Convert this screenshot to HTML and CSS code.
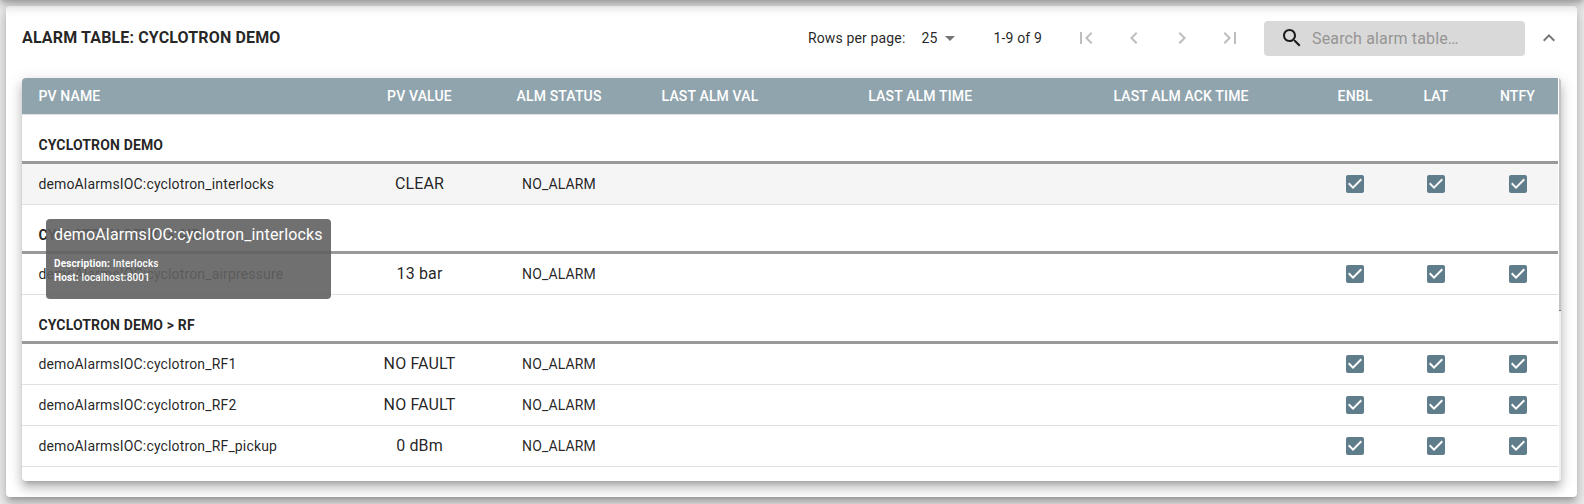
FILE: index.html
```
<!DOCTYPE html>
<html lang="en">
<head>
<meta charset="utf-8">
<title>Alarm Table</title>
<link rel="stylesheet" href="styles.css">
</head>
<body>
<svg class="defs" width="0" height="0">
  <symbol id="check" viewBox="0 0 24 24"><path d="M19 3H5c-1.11 0-2 .9-2 2v14c0 1.1.89 2 2 2h14c1.11 0 2-.9 2-2V5c0-1.1-.89-2-2-2zm-9 14l-5-5 1.41-1.41L10 14.17l7.59-7.59L19 8l-9 9z"/></symbol>
</svg>
<div class="appbar-shadow"></div>
<main class="card">
  <header class="toolbar">
    <h1 class="title">ALARM TABLE: CYCLOTRON DEMO</h1>
    <span class="rows-label">Rows per page:</span>
    <span class="rows-value">25</span>
    <svg class="icon caret" viewBox="0 0 24 24"><path d="M7 10l5 5 5-5z"/></svg>
    <span class="range">1-9 of 9</span>
    <nav class="pager">
      <svg class="icon" viewBox="0 0 24 24"><path d="M18.41 16.59L13.82 12l4.59-4.59L17 6l-6 6 6 6zM6 6h2v12H6z"/></svg>
      <svg class="icon" viewBox="0 0 24 24"><path d="M15.41 16.59L10.83 12l4.58-4.59L14 6l-6 6 6 6z"/></svg>
      <svg class="icon" viewBox="0 0 24 24"><path d="M8.59 16.59L13.17 12 8.59 7.41 10 6l6 6-6 6z"/></svg>
      <svg class="icon" viewBox="0 0 24 24"><path d="M5.59 7.41L10.18 12l-4.59 4.59L7 18l6-6-6-6zM16 6h2v12h-2z"/></svg>
    </nav>
    <div class="search">
      <svg class="icon" viewBox="0 0 24 24"><path d="M15.5 14h-.79l-.28-.27C15.41 12.59 16 11.11 16 9.5 16 5.91 13.09 3 9.5 3S3 5.91 3 9.5 5.91 16 9.5 16c1.61 0 3.09-.59 4.23-1.57l.27.28v.79l5 4.99L20.49 19l-4.99-5zm-6 0C7.01 14 5 11.99 5 9.5S7.01 5 9.5 5 14 7.01 14 9.5 11.99 14 9.5 14z"/></svg>
      <span class="placeholder">Search alarm table…</span>
    </div>
    <svg class="icon collapse" viewBox="0 0 24 24"><path d="M7.41 15.41L12 10.83l4.59 4.58L18 14l-6-6-6 6z"/></svg>
  </header>
  <section class="table-box">
    <div class="table">
      <div class="row head">
        <span>PV NAME</span><span>PV VALUE</span><span>ALM STATUS</span><span>LAST ALM VAL</span><span>LAST ALM TIME</span><span>LAST ALM ACK TIME</span><span>ENBL</span><span>LAT</span><span>NTFY</span>
      </div>
      <div class="group">CYCLOTRON DEMO</div>
      <div class="row hover">
        <span>demoAlarmsIOC:cyclotron_interlocks</span><span class="value">CLEAR</span><span>NO_ALARM</span><span></span><span></span><span></span><svg class="box"><use href="#check"/></svg><svg class="box"><use href="#check"/></svg><svg class="box"><use href="#check"/></svg>
      </div>
      <div class="group">CYCLOTRON DEMO &gt; AIR</div>
      <div class="row">
        <span>demoAlarmsIOC:cyclotron_airpressure</span><span class="value">13 bar</span><span>NO_ALARM</span><span></span><span></span><span></span><svg class="box"><use href="#check"/></svg><svg class="box"><use href="#check"/></svg><svg class="box"><use href="#check"/></svg>
      </div>
      <div class="group">CYCLOTRON DEMO &gt; RF</div>
      <div class="row">
        <span>demoAlarmsIOC:cyclotron_RF1</span><span class="value">NO FAULT</span><span>NO_ALARM</span><span></span><span></span><span></span><svg class="box"><use href="#check"/></svg><svg class="box"><use href="#check"/></svg><svg class="box"><use href="#check"/></svg>
      </div>
      <div class="row">
        <span>demoAlarmsIOC:cyclotron_RF2</span><span class="value">NO FAULT</span><span>NO_ALARM</span><span></span><span></span><span></span><svg class="box"><use href="#check"/></svg><svg class="box"><use href="#check"/></svg><svg class="box"><use href="#check"/></svg>
      </div>
      <div class="row">
        <span>demoAlarmsIOC:cyclotron_RF_pickup</span><span class="value">0 dBm</span><span>NO_ALARM</span><span></span><span></span><span></span><svg class="box"><use href="#check"/></svg><svg class="box"><use href="#check"/></svg><svg class="box"><use href="#check"/></svg>
      </div>
    </div>
    <div class="scrollbar"><div class="thumb"></div></div>
  </section>
</main>
<aside class="tooltip">
  <div class="tip-title">demoAlarmsIOC:cyclotron_interlocks</div>
  <div class="tip-line"><b>Description:</b> Interlocks</div>
  <div class="tip-line"><b>Host:</b> localhost:8001</div>
</aside>
</body>
</html>
```
FILE: styles.css
```
* { box-sizing: border-box; }
body {
  margin: 0;
  height: 504px;
  padding: 6px 7px 7px 6px;
  overflow: hidden;
  background: #eeeeee;
  color: rgba(0, 0, 0, 0.87);
  font: 400 14px/20px Roboto, sans-serif;
  letter-spacing: 0.01071em;
}
.defs { position: absolute; }
.appbar-shadow {
  position: absolute;
  z-index: 2;
  top: -40px;
  left: 0;
  width: 100%;
  height: 40px;
  box-shadow: 0 3px 5px -1px rgba(0, 0, 0, 0.2), 0 6px 10px 0 rgba(0, 0, 0, 0.14), 0 1px 18px 0 rgba(0, 0, 0, 0.12);
}
.card, .table-box {
  border-radius: 4px;
  background: #fff;
  box-shadow: 0 5px 5px -3px rgba(0, 0, 0, 0.2), 0 8px 10px 1px rgba(0, 0, 0, 0.14), 0 3px 14px 2px rgba(0, 0, 0, 0.12);
}
.card { height: 491px; padding: 0 16px 16px; }
.icon { display: block; flex: none; width: 24px; height: 24px; fill: currentColor; }

.toolbar { display: flex; align-items: center; height: 72px; padding-bottom: 8px; }
.title { margin: 0; flex: 1; font-size: 16px; font-weight: 700; letter-spacing: 0.00938em; }
.rows-label { margin-right: 16px; }
.caret { margin-left: 0; color: #757575; }
.range { margin-left: 32px; }
.pager { display: flex; gap: 24px; margin: 0 22px 0 32px; color: #bdbdbd; }
.search {
  display: flex;
  align-items: center;
  width: 261px;
  height: 35px;
  padding-left: 16px;
  border-radius: 4px;
  background: #d9d9d9;
}
.placeholder { margin-left: 8px; padding-top: 1px; color: #959595; font-size: 16px; letter-spacing: 0.00938em; }
.collapse { margin: 0 0 0 12px; color: #757575; }

.table-box { display: flex; justify-content: space-between; height: 403px; overflow: hidden; width: 1539px; }
.table { width: 1536px; }
.row {
  display: grid;
  grid-template-columns: 327px 141px 138px 164px 256.5px 265px 83px 79px 84px;
  align-items: center;
  height: 41px;
  border-bottom: 1px solid #e0e0e0;
  text-align: center;
}
.row > :first-child { padding-left: 16.4px; text-align: left; }
.row.head { height: 37px; background: #90a4ae; background-clip: padding-box; color: #fff; font-weight: 500; }
.row.hover { background: #f5f5f5; }
.group { height: 49px; padding: 20px 16.4px 0; border-bottom: 3px solid #999; font-weight: 700; letter-spacing: 0.01071em; }
.value { font-size: 16px; letter-spacing: 0.00938em; }
.box { justify-self: center; width: 24px; height: 24px; fill: #607d8b; }
.scrollbar { width: 2px; background: #f0f0f0; }
.thumb { height: 233px; background: #c4c4c4; border-bottom: 1px solid #607d8b; }

.tooltip {
  position: absolute;
  top: 219px;
  left: 46px;
  width: 285px;
  height: 80px;
  padding: 4px 8px;
  border-radius: 4px;
  background: rgba(97, 97, 97, 0.9);
  color: #fff;
  font-size: 10px;
  font-weight: 500;
  line-height: 14px;
}
.tip-title { margin-bottom: 10px; font-size: 16px; font-weight: 400; line-height: 24px; letter-spacing: 0.00938em; }
.tip-line { letter-spacing: 0.15px; }
```
